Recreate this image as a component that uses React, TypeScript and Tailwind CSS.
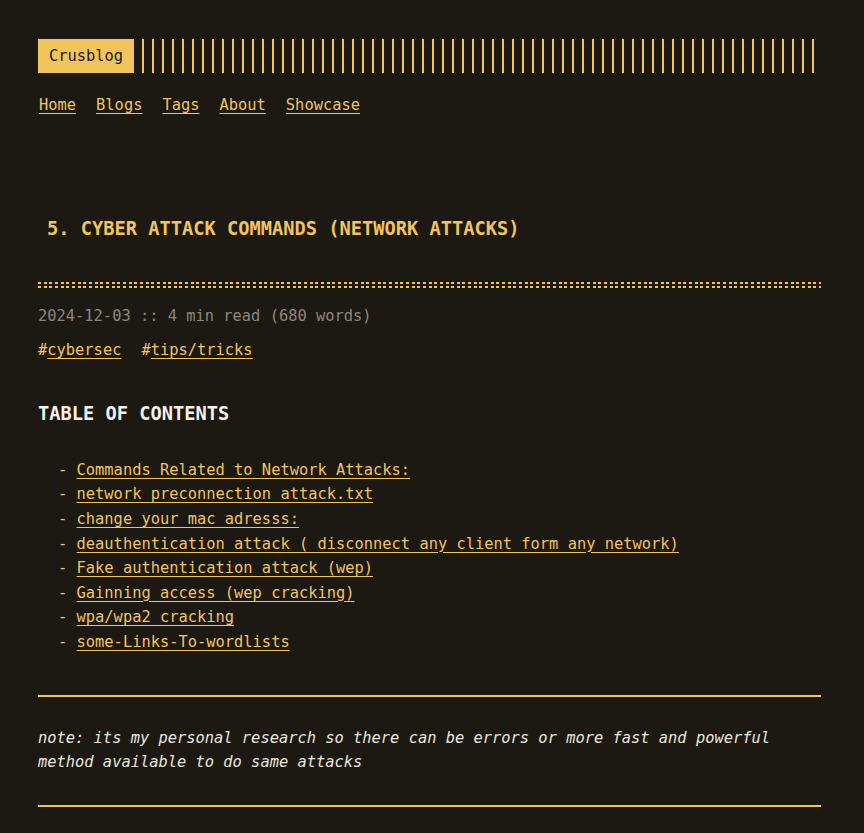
import React from "react";

const accent = "text-[#f2c45c]";

const toc = [
  "Commands Related to Network Attacks:",
  "network preconnection attack.txt",
  "change your mac adresss:",
  "deauthentication attack ( disconnect any client form any network)",
  "Fake authentication attack (wep)",
  "Gainning access (wep cracking)",
  "wpa/wpa2 cracking",
  "some-Links-To-wordlists",
];

export default function App() {
  return (
    <div className="min-h-[833px] bg-[#1c1912] font-['DejaVu_Sans_Mono','Liberation_Mono',monospace] text-[15.4px] leading-[24.6px] text-[#e9e6df]">
      <div className="ml-[38px] w-[783px] pt-[39px]">
        {/* HEADER */}
        <header className="flex h-[34px] gap-[8px]">
          <div className="flex w-[96px] items-center justify-center bg-[#f2c45c] text-[#1c1912]">Crusblog</div>
          <div className="w-[674px] bg-[repeating-linear-gradient(90deg,#f2c45c_0_2px,transparent_2px_10px)]" />
        </header>

        <nav className={`mt-[20px] flex gap-[20px] pl-[1px] ${accent}`}>
          {["Home", "Blogs", "Tags", "About", "Showcase"].map((n) => (
            <a key={n} href="#" className="underline underline-offset-[3px]">
              {n}
            </a>
          ))}
        </nav>

        {/* POST */}
        <h1 className={`mt-[97px] pl-[9px] text-[18.7px] leading-[28px] font-bold ${accent}`}>
          5. CYBER ATTACK COMMANDS (NETWORK ATTACKS)
        </h1>
        <div className="mt-[39px] flex flex-col gap-[2px]">
          <div className="h-[2px] bg-[repeating-linear-gradient(90deg,#f2c45c_0_3px,transparent_3px_5.66px)]" />
          <div className="h-[2px] bg-[repeating-linear-gradient(90deg,#f2c45c_0_3px,transparent_3px_5.66px)]" />
        </div>

        <div className="mt-[16px] text-[#8c877e]">2024-12-03 :: 4 min read (680 words)</div>
        <div className={`mt-[10px] flex gap-[20px] ${accent}`}>
          <span>
            #<a href="#" className="underline underline-offset-[3px]">cybersec</a>
          </span>
          <span>
            #<a href="#" className="underline underline-offset-[3px]">tips/tricks</a>
          </span>
        </div>

        <h2 className="mt-[37px] text-[18.7px] leading-[28px] font-bold text-[#f4f2ee]">TABLE OF CONTENTS</h2>
        <ul className={`mt-[30px] pl-[20px] ${accent}`}>
          {toc.map((t) => (
            <li key={t} className="whitespace-pre">
              {"- "}
              <a href="#" className="underline underline-offset-[3px]">
                {t}
              </a>
            </li>
          ))}
        </ul>

        <hr className="mt-[40px] border-0 border-t-2 border-[#f2c45c]" />
        <p className="mt-[29px] italic">
          note: its my personal research so there can be errors or more fast and powerful method available to do same
          attacks
        </p>
        <hr className="mt-[30px] border-0 border-t-2 border-[#f2c45c]" />
      </div>
    </div>
  );
}
